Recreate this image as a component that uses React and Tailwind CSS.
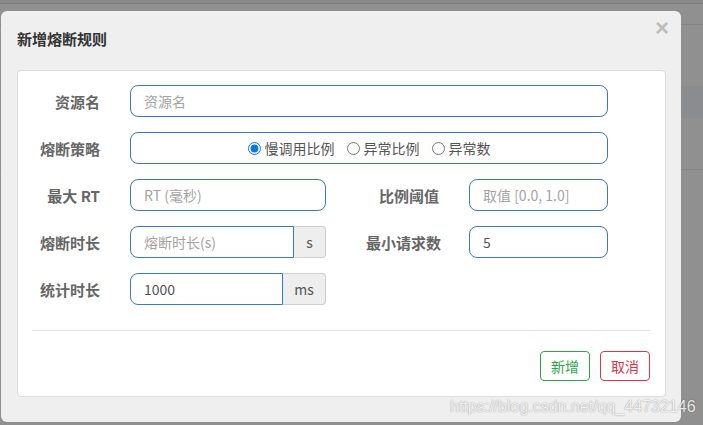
import React from "react";

const font = { fontFamily: '"Noto Sans CJK SC", "Liberation Sans", sans-serif' };

function Label({ children, w }) {
  return (
    <div className={`${w} shrink-0 text-right text-[15px] font-bold text-[#666] leading-none`}>
      {children}
    </div>
  );
}

function Input({ w, placeholder, value }) {
  return (
    <div
      className={`${w} h-[32px] shrink-0 rounded-[8px] border border-[#3a7bbf] bg-white px-[13px] flex items-center text-[14px] ${
        value ? "text-[#555]" : "text-[#a3a3a3]"
      }`}
    >
      {value || placeholder}
    </div>
  );
}

function Group({ inputW, addonW, placeholder, value, addon }) {
  return (
    <div className="flex h-[32px] w-[196px] shrink-0">
      <div
        className={`${inputW} h-full rounded-l-[8px] border border-[#3a7bbf] bg-white px-[13px] flex items-center text-[14px] ${
          value ? "text-[#555]" : "text-[#a3a3a3]"
        }`}
      >
        {value || placeholder}
      </div>
      <div
        className={`${addonW} h-full rounded-r-[4px] border border-l-0 border-[#cfcfcf] bg-[#eeeeee] flex items-center justify-center text-[14px] text-[#555]`}
      >
        {addon}
      </div>
    </div>
  );
}

function Radio({ label, checked }) {
  return (
    <label className="flex items-center gap-[4px] text-[14px] text-[#555]">
      <input
        type="radio"
        name="strategy"
        defaultChecked={checked}
        className="m-0 h-[13px] w-[13px] accent-[#0b74ef]"
      />
      <span>{label}</span>
    </label>
  );
}

export default function App() {
  return (
    <div className="relative h-[425px] w-[703px] overflow-hidden bg-[#8f8f8f]" style={font}>
      {/* page behind the overlay */}
      <div className="flex h-full flex-col">
        <div className="h-[4px] bg-[#888888] border-b border-[#7d7d7d]" />
        <div className="h-[21px] bg-[#909090] border-b border-[#858585]" />
        <div className="h-[61px] bg-[#909090]" />
        <div className="h-[32px] bg-[#8b8c8e]" />
        <div className="h-[52px] bg-[#909090] border-b border-[#858585]" />
        <div className="flex-1 bg-[#909090]" />
      </div>

      {/* modal */}
      <div className="absolute left-[1px] top-[11px] flex h-[411px] w-[680px] flex-col rounded-[6px] bg-[#efefef]">
        <div className="flex h-[59px] items-start justify-between pl-[16px] pr-[12px]">
          <div className="pt-[17px] text-[15px] font-bold text-[#333]">新增熔断规则</div>
          <div className="pt-[2px] text-[24px] font-bold leading-[30px] text-[#bdbdbd]" style={{ fontFamily: '"Liberation Sans", sans-serif' }}>
            ×
          </div>
        </div>

        <div className="ml-[16px] flex h-[327px] w-[649px] flex-col rounded-[4px] border border-[#dcdcdc] bg-white px-[14px] pt-[14px]">
          <div className="flex flex-col gap-[15px]">
            <div className="flex items-center">
              <Label w="w-[68px]">资源名</Label>
              <div className="w-[30px]" />
              <Input w="w-[478px]" placeholder="资源名" />
            </div>
            <div className="flex items-center">
              <Label w="w-[68px]">熔断策略</Label>
              <div className="w-[30px]" />
              <div className="flex h-[32px] w-[478px] items-center justify-center gap-[12px] rounded-[8px] border border-[#3a7bbf] bg-white">
                <Radio label="慢调用比例" checked />
                <Radio label="异常比例" />
                <Radio label="异常数" />
              </div>
            </div>
            <div className="flex items-center">
              <Label w="w-[68px]">最大 RT</Label>
              <div className="w-[30px]" />
              <Input w="w-[196px]" placeholder="RT (毫秒)" />
              <Label w="w-[113px]">比例阈值</Label>
              <div className="w-[30px]" />
              <Input w="w-[139px]" placeholder="取值 [0.0, 1.0]" />
            </div>
            <div className="flex items-center">
              <Label w="w-[68px]">熔断时长</Label>
              <div className="w-[30px]" />
              <Group inputW="w-[164px]" addonW="w-[32px]" placeholder="熔断时长(s)" addon="s" />
              <Label w="w-[115px]">最小请求数</Label>
              <div className="w-[28px]" />
              <Input w="w-[139px]" value="5" />
            </div>
            <div className="flex items-center">
              <Label w="w-[68px]">统计时长</Label>
              <div className="w-[30px]" />
              <Group inputW="w-[153px]" addonW="w-[43px]" value="1000" addon="ms" />
            </div>
          </div>

          <div className="mt-[25px] h-px bg-[#e3e3e3]" />

          <div className="mt-[20px] flex justify-end gap-[10px] pr-[1px]">
            <button className="h-[30px] w-[50px] rounded-[4px] border border-[#28a745] bg-white text-[14px] text-[#28a745]">
              新增
            </button>
            <button className="h-[30px] w-[50px] rounded-[4px] border border-[#dc3545] bg-white text-[14px] text-[#dc3545]">
              取消
            </button>
          </div>
        </div>
      </div>

      {/* watermark */}
      <div
        className="absolute left-[450px] top-[395px] text-[16px] text-white/85"
        style={{ fontFamily: '"Liberation Sans", sans-serif', textShadow: "0 0 1px rgba(0,0,0,0.35), 0 0 2px rgba(0,0,0,0.15)" }}
      >
        https://blog.csdn.net/qq_44732146
      </div>
    </div>
  );
}
